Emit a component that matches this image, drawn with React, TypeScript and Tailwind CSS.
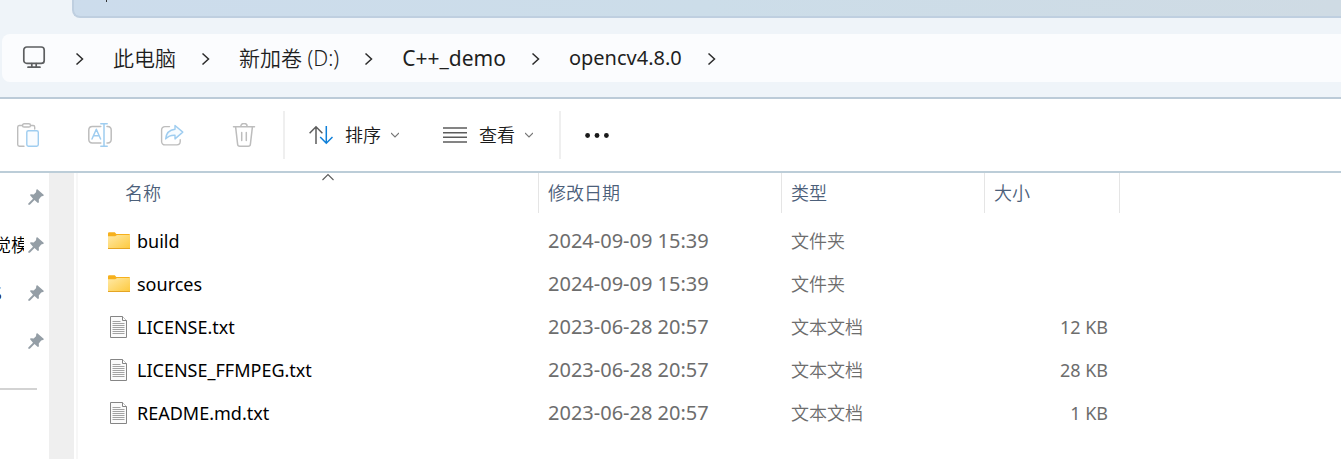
import type { ReactNode } from "react";

type FileEntry = {
  name: string;
  kind: "folder" | "text";
  modified: string;
  type: string;
  size?: string;
};

const files: FileEntry[] = [
  { name: "build", kind: "folder", modified: "2024-09-09 15:39", type: "文件夹" },
  { name: "sources", kind: "folder", modified: "2024-09-09 15:39", type: "文件夹" },
  { name: "LICENSE.txt", kind: "text", modified: "2023-06-28 20:57", type: "文本文档", size: "12 KB" },
  { name: "LICENSE_FFMPEG.txt", kind: "text", modified: "2023-06-28 20:57", type: "文本文档", size: "28 KB" },
  { name: "README.md.txt", kind: "text", modified: "2023-06-28 20:57", type: "文本文档", size: "1 KB" },
];

const crumbs = [
  { label: "此电脑", className: "text-[21px] font-[350]" },
  { label: "新加卷 (D:)", className: "text-[21px] font-[350]" },
  { label: "C++_demo", className: "text-[21px]" },
  { label: "opencv4.8.0", className: "text-[20px]" },
];

const pinned = ["", "觉模", "S", ""];

function MonitorIcon() {
  return (
    <svg className="size-6 shrink-0" viewBox="0 0 24 24" fill="none" stroke="#5c5e60" strokeWidth="1.7" strokeLinecap="round">
      <rect x="1.8" y="1" width="20.4" height="16.4" rx="3" />
      <path d="M9.8 17.7v3M14.2 17.7v3M6 21.2h12" />
    </svg>
  );
}

function CrumbChevron() {
  return (
    <svg className="h-6 w-[63px] shrink-0" viewBox="0 0 63 24" fill="none" stroke="#2b2b2b" strokeWidth="1.5">
      <path d="M26.5 7.5l6 5.5-6 5.5" />
    </svg>
  );
}

function PasteIcon() {
  return (
    <svg className="size-6" viewBox="0 0 24 24" fill="none" strokeWidth="1.4" strokeLinejoin="round" strokeLinecap="round">
      <path d="M6.5 2.5H3.2A1.7 1.7 0 0 0 1.7 4.2v17.4a1.7 1.7 0 0 0 1.7 1.7H8M15 2.5h2.2A1.5 1.5 0 0 1 18.7 4v2" stroke="#bdbdbd" />
      <rect x="6.5" y="0.8" width="8" height="3.2" rx="1.6" stroke="#bdbdbd" />
      <rect x="10.8" y="7.7" width="11.5" height="15.5" rx="1.6" stroke="#9fcdf0" fill="#f9fcff" />
    </svg>
  );
}

function RenameIcon() {
  return (
    <svg className="size-6" viewBox="0 0 24 24" fill="none" strokeWidth="1.5" strokeLinecap="round" strokeLinejoin="round">
      <path d="M12.8 3.5H4.3A3.6 3.6 0 0 0 .8 7v9.6a3.6 3.6 0 0 0 3.5 3.5h8.5M19 3.5h.8A3.6 3.6 0 0 1 23.2 7v9.6a3.6 3.6 0 0 1-3.4 3.5H19" stroke="#bdbdbd" />
      <path d="M4 16L8.3 6.3 12.6 16M5.6 12.8H11" stroke="#9fcdf0" />
      <path d="M12.8.8h6.4M16 .8v22.4M12.8 23.2h6.4" stroke="#9fcdf0" />
    </svg>
  );
}

function ShareIcon() {
  return (
    <svg className="size-6" viewBox="0 0 24 24" fill="none" strokeWidth="1.4" strokeLinecap="round" strokeLinejoin="round">
      <path d="M9.5 3.6H5A3.4 3.4 0 0 0 1.6 7v11.5A3.4 3.4 0 0 0 5 21.9h11.8a3.4 3.4 0 0 0 3.4-3.4v-1.7" stroke="#bdbdbd" />
      <path d="M15 2.5l7.8 6.6-7.8 6.8v-3.6c-4-.2-6.7.7-9.3 3.6.4-5.5 4-9 9.3-9.6z" stroke="#9fcdf0" fill="#f6fbff" />
    </svg>
  );
}

function TrashIcon() {
  return (
    <svg className="size-6" viewBox="0 0 24 24" fill="none" stroke="#bdbdbd" strokeWidth="1.5" strokeLinecap="round" strokeLinejoin="round">
      <path d="M1.5 3.8h21M3.6 3.8l2 17.4a2.2 2.2 0 0 0 2.2 2h8.4a2.2 2.2 0 0 0 2.2-2l2-17.4M8.8 3.6a3.2 3.2 0 0 1 6.4 0M9.7 9.5v8M14.3 9.5v8" />
    </svg>
  );
}

function SortIcon() {
  return (
    <svg className="size-6" viewBox="0 0 24 24" fill="none" strokeWidth="1.5">
      <path d="M7 21V3.8M.6 10.2L7 3.8l6.4 6.4" stroke="#5c5c5c" />
      <path d="M17.3 3v17.2M11.2 14l6.1 6.2 6.2-6.2" stroke="#0f7fd8" />
    </svg>
  );
}

function ViewIcon() {
  return (
    <svg className="size-6" viewBox="0 0 24 24" fill="none" stroke="#5c5c5c" strokeWidth="1.4">
      <path d="M0 5h24M0 9.7h24M0 14.3h24M0 19h24" />
    </svg>
  );
}

function DownChevron() {
  return (
    <svg className="h-2 w-2" viewBox="0 0 8 8" fill="none" stroke="#757575" strokeWidth="1.1">
      <path d="M0 2l4 4 4-4" />
    </svg>
  );
}

function PinIcon() {
  return (
    <svg className="size-4 shrink-0" viewBox="0 0 16 16" fill="#949ea6">
      <path d="M9.6.4l6 5.4c.4.4 0 1.1-.7 1.3l-1.7.5-2.4 2.9.1 2.6c0 .8-.7 1.1-1.3.6L6.5 11 1.8 15.8H.3v-1.3L5 9.7 2.3 6.6c-.5-.6-.1-1.3.6-1.3l2.8.1L8 3.3 8.3 1C8.4.2 9.1-.1 9.6.4z" />
    </svg>
  );
}

function FolderIcon() {
  return (
    <svg className="h-[18px] w-[22px] shrink-0" viewBox="0 0 22 18">
      <defs>
        <linearGradient id="folder-face" x1="0" y1="0" x2="1" y2="1">
          <stop offset="0" stopColor="#ffe9a6" />
          <stop offset="1" stopColor="#fdc93d" />
        </linearGradient>
      </defs>
      <path d="M0 1.5A1.2 1.2 0 0 1 1.2.3h5.6L8.3 2H21a1 1 0 0 1 1 1v3H0z" fill="#f6b01c" />
      <path d="M0 4.3h7.2L9 3h13v13.2a.8.8 0 0 1-.8.8H.8a.8.8 0 0 1-.8-.8z" fill="url(#folder-face)" />
      <path d="M0 16.5h22" stroke="#e5a524" />
    </svg>
  );
}

function TextFileIcon() {
  return (
    <svg className="h-[22px] w-[22px] shrink-0" viewBox="0 0 22 22" fill="none">
      <path d="M2.5.5h12l4 4v17h-16z" fill="#fbfbfb" stroke="#858585" />
      <path d="M14.5.5v4h4" stroke="#858585" fill="#fff" />
      <path d="M4.5 5.5h8M4.5 7.5h12M4.5 9.5h12M4.5 11.5h12M4.5 13.5h12M4.5 15.5h12M4.5 17.5h12" stroke="#a3a3a3" />
    </svg>
  );
}

function ToolButton({ label, children }: { label: string; children: ReactNode }) {
  return (
    <button type="button" disabled aria-label={label} className="flex h-12 w-[72px] items-center justify-center">
      {children}
    </button>
  );
}

function AddressBar() {
  return (
    <nav aria-label="地址栏" className="ml-0.5 flex h-12 items-center rounded-l-lg bg-[#fbfcfe] pl-5 text-[#1f1f1f]">
      <MonitorIcon />
      <div className="ml-1 flex items-center">
        {crumbs.map((crumb) => (
          <div key={crumb.label} className="flex items-center">
            <CrumbChevron />
            <button type="button" className={`${crumb.className} leading-7 whitespace-nowrap`}>
              {crumb.label}
            </button>
          </div>
        ))}
        <CrumbChevron />
      </div>
    </nav>
  );
}

function Toolbar() {
  return (
    <div role="toolbar" className="flex h-[74px] items-center border-b-2 border-[#bccdd8] bg-white text-[18px] leading-6 font-[350] text-[#1a1a1a]">
      <div className="-ml-2 flex">
        <ToolButton label="粘贴"><PasteIcon /></ToolButton>
        <ToolButton label="重命名"><RenameIcon /></ToolButton>
        <ToolButton label="共享"><ShareIcon /></ToolButton>
        <ToolButton label="删除"><TrashIcon /></ToolButton>
      </div>
      <div className="ml-[3px] h-12 w-0.5 bg-[#efefef]" />
      <button type="button" className="ml-6 flex items-center">
        <SortIcon />
        <span className="mr-2.5 ml-3">排序</span>
        <DownChevron />
      </button>
      <button type="button" className="ml-11 flex items-center">
        <ViewIcon />
        <span className="mr-2.5 ml-3">查看</span>
        <DownChevron />
      </button>
      <div className="ml-[26px] h-12 w-0.5 bg-[#efefef]" />
      <button type="button" aria-label="更多" className="ml-6">
        <svg className="size-6" viewBox="0 0 24 24" fill="#1a1a1a">
          <circle cx="2.6" cy="12.5" r="2.4" />
          <circle cx="12" cy="12.5" r="2.4" />
          <circle cx="21.4" cy="12.5" r="2.4" />
        </svg>
      </button>
    </div>
  );
}

function Sidebar() {
  return (
    <aside className="flex w-[49px] shrink-0 flex-col overflow-hidden">
      {pinned.map((label, i) => (
        <div key={i} className="flex h-12 items-center">
          <div className="flex w-6 justify-end overflow-hidden text-[18px] leading-6 font-[350] whitespace-nowrap text-black">
            {label === "S" ? <span className="-ml-2 w-8">{label}</span> : <span className="w-[31px] shrink-0">{label}</span>}
          </div>
          <div className="ml-1">
            <PinIcon />
          </div>
        </div>
      ))}
      <div className="mt-[23px] h-0.5 w-[37px] bg-[#d3d3d3]" />
    </aside>
  );
}

function FileTable() {
  return (
    <table className="w-[1042px] table-fixed border-separate border-spacing-0 text-left">
      <colgroup>
        <col className="w-[461px]" />
        <col className="w-[243px]" />
        <col className="w-[203px]" />
        <col className="w-[135px]" />
      </colgroup>
      <thead className="text-[18px] leading-6 text-[#4c607a]">
        <tr className="h-10">
          <th aria-sort="ascending" className="relative border-r border-[#e5e5e5] pl-[47px] font-[350]">
            名称
            <svg className="absolute top-0 left-[244px] h-2 w-3" viewBox="0 0 12 8" fill="none" stroke="#5c5c5c" strokeWidth="1.1">
              <path d="M.5 7L6 1.5l5.5 5.5" />
            </svg>
          </th>
          <th className="border-r border-[#e5e5e5] pl-[9px] font-[350]">修改日期</th>
          <th className="border-r border-[#e5e5e5] pl-[9px] font-[350]">类型</th>
          <th className="border-r border-[#e5e5e5] pl-[9px] font-[350]">大小</th>
        </tr>
      </thead>
      <tbody className="text-[18px] leading-6 text-[#6d6d6d]">
        <tr aria-hidden="true" className="h-1.5">
          <td colSpan={4} className="p-0" />
        </tr>
        {files.map((file) => (
          <tr key={file.name} className="h-[43px]">
            <td className="p-0 pl-[30px]">
              <div className="flex items-center gap-[7px] text-black">
                {file.kind === "folder" ? <FolderIcon /> : <TextFileIcon />}
                <span>{file.name}</span>
              </div>
            </td>
            <td className="p-0 pl-[9px] text-[20px]">{file.modified}</td>
            <td className="p-0 pl-[9px] font-[350]">{file.type}</td>
            <td className="p-0 pr-3 text-right">{file.size}</td>
          </tr>
        ))}
      </tbody>
    </table>
  );
}

export default function App() {
  return (
    <div className="flex min-h-screen flex-col bg-white font-['Noto_Sans','Noto_Sans_CJK_SC',sans-serif]">
      <header className="border-b-2 border-[#bccbd8] bg-[#eff4f9] pb-[15px]">
        <div className="mb-4 ml-[72px] h-[18px] rounded-bl-lg border-b-2 border-l-2 border-[#bfcfe0] bg-linear-to-r from-[#ccdcec] via-[#ccdde9] to-[#cfdbe4]">
          <div className="ml-8 h-0.5 w-px bg-[#333]" />
        </div>
        <AddressBar />
      </header>
      <Toolbar />
      <div className="flex grow">
        <Sidebar />
        <div className="mr-0.5 w-[25px] shrink-0 bg-[#efefef]" />
        <main className="grow overflow-hidden border-l-2 border-[#f7f7f7]">
          <FileTable />
        </main>
      </div>
    </div>
  );
}
